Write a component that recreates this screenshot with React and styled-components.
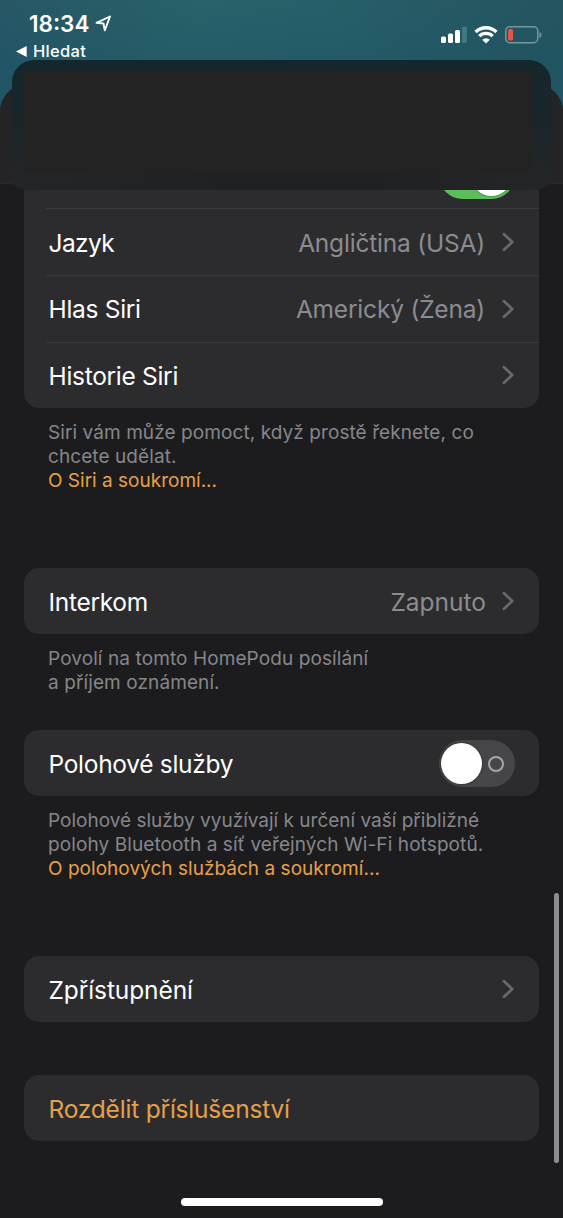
import styled, { createGlobalStyle } from "styled-components";

const GlobalStyle = createGlobalStyle`
* {
    box-sizing: border-box;
}
body {
    margin: 0;
    background: #1c1c1e;
    font-family: Inter, "Liberation Sans", sans-serif;
}
`

const Screen = styled.div`
position: relative;
width: 563px;
height: 1218px;
overflow: hidden;
display: flex;
flex-direction: column;
background: linear-gradient(180deg, rgba(27, 84, 101, 0) 0, rgba(27, 84, 101, 0.4) 60px, #1d5566 120px),
    linear-gradient(90deg, #275765 0, #296269 35%, #27606a 55%, #25545f 100%);
`

const StatusBar = styled.header`
display: flex;
justify-content: space-between;
height: 84px;
padding: 11px 20px 0 16px;
color: #fff;
`

const Clock = styled.div`
display: flex;
align-items: center;
gap: 6px;
height: 24px;
padding-left: 13px;
font-size: 22.5px;
font-weight: 600;
letter-spacing: 0;
`

const BackLink = styled.div`
display: flex;
align-items: center;
gap: 6px;
height: 20px;
margin-top: 6px;
font-size: 16.5px;
font-weight: 500;
letter-spacing: 0.3px;
`

const Indicators = styled.div`
display: flex;
align-items: center;
gap: 7px;
height: 20px;
margin-top: 14px;
`

const Sheet = styled.main`
flex: 1;
display: flex;
flex-direction: column;
border-radius: 28px 28px 0 0;
overflow: hidden;
background: #1c1c1e;
`

const SheetHeader = styled.div`
flex: none;
height: 100px;
background: #242426;
border-bottom: 1px solid #2a2a2c;
`

const HeaderCover = styled.div`
position: absolute;
top: 60px;
left: 12px;
width: 539px;
height: 130px;
padding: 12px 20px 0 12px;
border-radius: 22px 22px 0 0;
clip-path: polygon(0 0, 100% 0, 100% 124px, 527px 100%, 12px 100%, 0 124px);
background: linear-gradient(180deg, #15272c 0, #18262a 50px, #232527 110px, #242527 100%);
`

const CoverFill = styled.div`
height: 100px;
background: #232323;
`

const CoverEdge = styled.div`
height: 18px;
background: linear-gradient(90deg, #242527 0, #202123 45%, #1f2122 65%, #242526 100%);
`

const List = styled.div`
display: flex;
flex-direction: column;
padding: 0 24px;
`

const Card = styled.section`
margin-top: ${(p) => p.$top || 0}px;
border-radius: ${(p) => (p.$cut ? "0 0 15px 15px" : "15px")};
background: #2c2c2e;
overflow: hidden;
`

const Row = styled.div`
display: flex;
align-items: center;
height: ${(p) => p.$height || 66}px;
padding: 0 24px 0 24.5px;
color: ${(p) => (p.$accent ? "#e6a04b" : "#fff")};
font-size: 24.5px;
`

const CutRow = styled(Row)`
height: 24px;
align-items: flex-end;
justify-content: flex-end;
padding-bottom: 9px;
overflow: hidden;
`

const Divider = styled.div`
height: 1px;
margin-left: 22px;
background: #3b3b3d;
`

const Label = styled.span`
flex: 1;
padding-top: 1px;
white-space: nowrap;
letter-spacing: ${(p) => p.$spacing ?? -0.3}px;
`

const Value = styled.span`
margin-right: ${(p) => p.$gap ?? 17}px;
padding-top: 1px;
color: #8b8b90;
white-space: nowrap;
letter-spacing: ${(p) => p.$spacing ?? -0.2}px;
`

const Note = styled.p`
margin: 13px 0 0 24px;
color: #86868b;
font-size: 19px;
line-height: 24px;
white-space: nowrap;

a {
    color: #e6a04b;
}
`

const Line = styled.span`
display: block;
letter-spacing: ${(p) => p.$spacing ?? 0}px;
`

const Toggle = styled.div`
flex: none;
display: flex;
align-items: center;
justify-content: ${(p) => (p.$on ? "flex-end" : "space-between")};
width: 76px;
height: 47px;
padding: ${(p) => (p.$on ? "0 3px" : "0 11px 0 2px")};
border-radius: 24px;
background: ${(p) => (p.$on ? "#5dbd5b" : "#464649")};
`

const Knob = styled.div`
width: 41px;
height: 41px;
border-radius: 50%;
background: #fff;
box-shadow: 0 0 2px rgba(0, 0, 0, 0.6);
`

const OffMark = styled.div`
width: 16px;
height: 16px;
margin-top: 1px;
border: 2px solid #a5a5a7;
border-radius: 50%;
`

const ScrollThumb = styled.div`
position: absolute;
top: 893px;
right: 4px;
width: 5px;
height: 270px;
border-radius: 3px;
background: #8d8d8f;
`

const HomeIndicator = styled.div`
position: absolute;
bottom: 12px;
left: 181px;
width: 202px;
height: 8px;
border-radius: 4px;
background: #fff;
`

const Chevron = () => (
    <svg width="13" height="20" viewBox="0 0 13 20" fill="none">
        <path d="M2 2.200l8.200 7.800L2 17.800" stroke="#68686c" strokeWidth="2.800" strokeLinecap="round" strokeLinejoin="round" />
    </svg>
)

const LocationArrow = () => (
    <svg width="17" height="17" viewBox="0 0 17 17" fill="none">
        <path d="M15 1.500L1.500 7.800l7 .7 1.300 6.800z" stroke="#fff" strokeWidth="1.900" strokeLinejoin="round" />
    </svg>
)

const BackArrow = () => (
    <svg width="11" height="11" viewBox="0 0 11 11">
        <path d="M10.7 0v11L0 5.5z" fill="#fff" />
    </svg>
)

const Signal = () => (
    <svg width="26" height="18" viewBox="0 0 26 18" fill="#fff">
        <rect x="0" y="10.5" width="5" height="6.5" rx="1.5" />
        <rect x="7" y="7.5" width="5" height="9.5" rx="1.5" />
        <rect x="14" y="4" width="5" height="13" rx="1.5" />
        <rect x="21" y="0.500" width="5" height="16.500" rx="1.5" fill="#3f7880" />
    </svg>
)

const Wifi = () => (
    <svg width="24" height="18" viewBox="0 0 24 18" fill="none" stroke="#fff" strokeWidth="3.300">
        <path d="M1.600 6a14.900 14.900 0 0 1 20.800 0" />
        <path d="M5.300 10.100a9.500 9.500 0 0 1 13.400 0" />
        <path d="M12 17.5l-3.800-3.800a5.400 5.400 0 0 1 7.600 0z" fill="#fff" stroke="none" />
    </svg>
)

const Battery = () => (
    <svg width="38" height="18" viewBox="0 0 38 18" fill="none">
        <rect x="0.75" y="0.75" width="32" height="16" rx="4" stroke="#78979f" strokeWidth="1.500" />
        <rect x="3" y="3" width="5" height="11.500" rx="1.500" fill="#e4544b" />
        <path d="M34.500 6v6c1.300-.5 2-1.600 2-3s-.7-2.500-2-3z" fill="#78979f" />
    </svg>
)

const App = () => {
    return <>
    <GlobalStyle />
    <Screen>
        <StatusBar>
            <div>
                <Clock>18:34 <LocationArrow /></Clock>
                <BackLink><BackArrow /> Hledat</BackLink>
            </div>
            <Indicators>
                <Signal />
                <Wifi />
                <Battery />
            </Indicators>
        </StatusBar>
        <Sheet>
            <SheetHeader />
            <List>
                <Card $cut>
                    <CutRow>
                        <Toggle $on><Knob /></Toggle>
                    </CutRow>
                    <Divider />
                    <Row>
                        <Label $spacing={-0.6}>Jazyk</Label>
                        <Value>Angličtina (USA)</Value>
                        <Chevron />
                    </Row>
                    <Divider />
                    <Row $height={65.5}>
                        <Label>Hlas Siri</Label>
                        <Value>Americký (Žena)</Value>
                        <Chevron />
                    </Row>
                    <Divider />
                    <Row $height={65.5}>
                        <Label>Historie Siri</Label>
                        <Chevron />
                    </Row>
                </Card>
                <Note>
                    <Line $spacing={0.08}>Siri vám může pomoct, když prostě řeknete, co</Line>
                    <Line $spacing={0.08}>chcete udělat.</Line>
                    <Line as="a">O Siri a soukromí...</Line>
                </Note>
                <Card $top={75}>
                    <Row>
                        <Label>Interkom</Label>
                        <Value $gap={16} $spacing={0}>Zapnuto</Value>
                        <Chevron />
                    </Row>
                </Card>
                <Note>
                    <Line $spacing={0.1}>Povolí na tomto HomePodu posílání</Line>
                    <Line $spacing={0.1}>a příjem oznámení.</Line>
                </Note>
                <Card $top={35}>
                    <Row>
                        <Label>Polohové služby</Label>
                        <Toggle><Knob /><OffMark /></Toggle>
                    </Row>
                </Card>
                <Note>
                    <Line>Polohové služby využívají k určení vaší přibližné</Line>
                    <Line $spacing={0.1}>polohy Bluetooth a síť veřejných Wi-Fi hotspotů.</Line>
                    <Line as="a" $spacing={0.03}>O polohových službách a soukromí...</Line>
                </Note>
                <Card $top={75}>
                    <Row>
                        <Label $spacing={-0.1}>Zpřístupnění</Label>
                        <Chevron />
                    </Row>
                </Card>
                <Card $top={53}>
                    <Row $accent>
                        <Label $spacing={-0.2}>Rozdělit příslušenství</Label>
                    </Row>
                </Card>
            </List>
        </Sheet>
        <HeaderCover>
            <CoverFill />
            <CoverEdge />
        </HeaderCover>
        <ScrollThumb />
        <HomeIndicator />
    </Screen>
    </>
}

export default App;
